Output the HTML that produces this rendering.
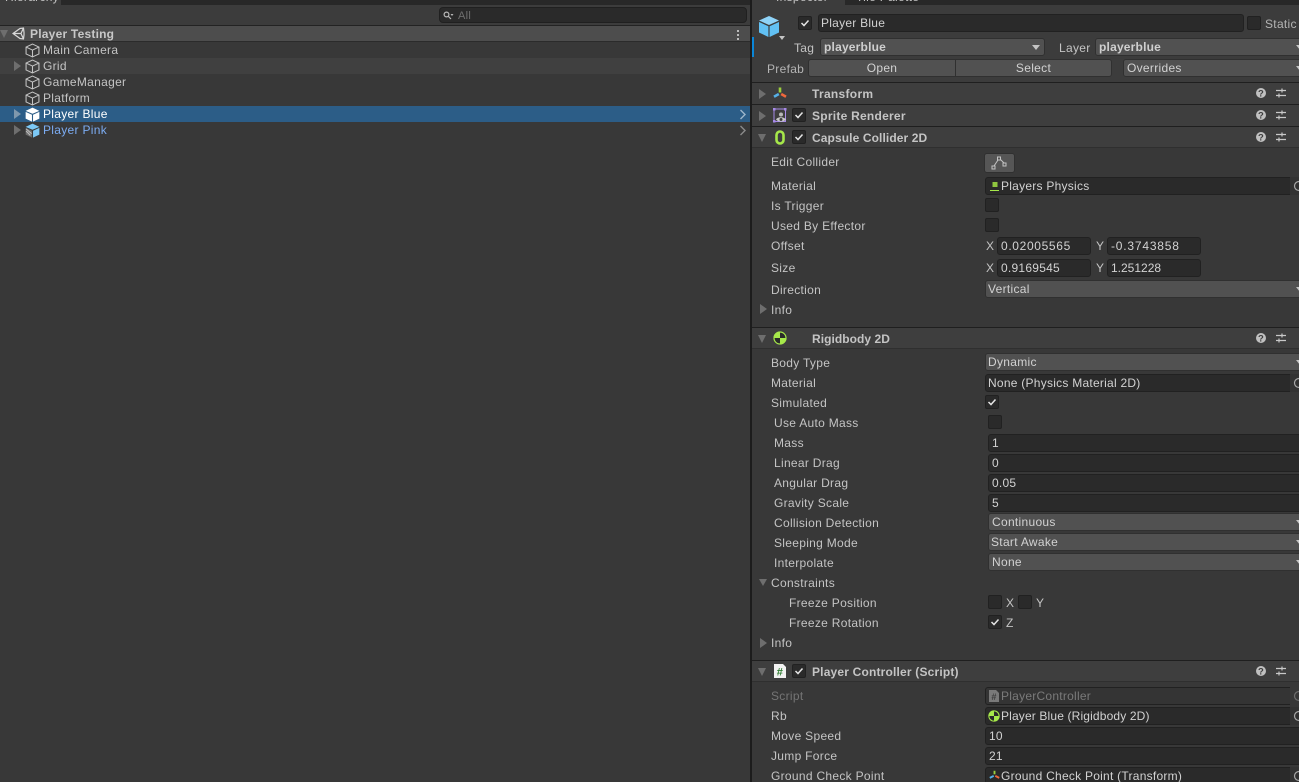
<!DOCTYPE html>
<html><head><meta charset="utf-8"><style>
html,body{margin:0;padding:0;background:#383838;}
#p{position:relative;width:1299px;height:782px;overflow:hidden;background:#383838;font:12px/16px "Liberation Sans",sans-serif;color:#c4c4c4;letter-spacing:.3px;}
#p div,#p svg{position:absolute;}
.t{white-space:nowrap;height:16px;}
.b{font-weight:bold;letter-spacing:.2px;}
.r{left:0;width:750px;height:16px;}
.hd{left:752px;width:547px;background:#3e3e3e;border-top:1px solid #1f1f1f;box-sizing:border-box;}
.in{background:#2a2a2a;border:1px solid #212121;border-radius:3px;box-sizing:border-box;height:18px;color:#d2d2d2;padding-left:3px;line-height:16px;white-space:nowrap;overflow:hidden;letter-spacing:.25px;}
.dd{background:#515151;border:1px solid #303030;border-radius:3px;box-sizing:border-box;height:18px;color:#d2d2d2;padding-left:2px;line-height:17px;white-space:nowrap;overflow:hidden;letter-spacing:.3px;}
.cb{width:14px;height:14px;background:#2a2a2a;border:1px solid #212121;border-radius:2px;box-sizing:border-box;}
.tri{width:0;height:0;border-style:solid;border-color:transparent;}
.rt{border-width:5px 0 5px 8px;border-left-color:#6e6e6e;}
.dn{border-width:8px 5px 0 5px;border-top-color:#6e6e6e;}
</style></head><body><div id="p">

<!-- top strip -->
<div style="left:0;top:0;width:750px;height:5px;background:#282828"></div>
<div style="left:0;top:0;width:61px;height:5px;background:#3c3c3c"></div>
<div class="t" style="left:5px;top:-11px;color:#c4c4c4">Hierarchy</div>
<div style="left:0;top:5px;width:750px;height:20px;background:#3c3c3c"></div>
<div style="left:439px;top:7px;width:308px;height:16px;background:#2a2a2a;border:1px solid #202020;border-radius:4px;box-sizing:border-box"></div>
<svg style="left:443px;top:11px" width="11" height="9" viewBox="0 0 11 9" fill="none" stroke="#b8b8b8" stroke-width="1.2"><circle cx="3.5" cy="3.5" r="2.4"/><path d="M5.3 5.3 8 8"/><path d="M7.5 3h3l-1.5 2z" fill="#b8b8b8" stroke="none"/></svg>
<div class="t" style="left:458px;top:8px;color:#6f6f6f;font-size:11px">All</div>

<!-- hierarchy -->
<div style="left:0;top:25px;width:750px;height:17px;background:#4d4d4d;border-top:1px solid #232323;border-bottom:1px solid #2b2b2b;box-sizing:border-box"></div>
<div class="tri" style="left:0;top:30px;border-width:8px 4px 0 4px;border-top-color:#6e6e6e"></div>
<svg style="left:12px;top:27px" width="13" height="13" viewBox="0 0 13 13" fill="none" stroke="#d8d8d8" stroke-width="1.2"><path d="M1 6.5 8 1.5 11.5 1 12 5.5 12 8 11.5 12 8 11.5 1 6.5ZM1 6.5H9L11.5 1M9 6.5 11.5 12"/></svg>
<div class="t b" style="left:30px;top:26px;color:#c8c8c8;letter-spacing:.22px">Player Testing</div>
<div style="left:737px;top:30px;width:2px;height:2px;background:#bbb;box-shadow:0 4px 0 #bbb,0 8px 0 #bbb"></div>

<div class="r" style="top:58px;background:#404040"></div>
<div class="r" style="top:106px;background:#2c5d87"></div>

<svg style="left:25px;top:43px" width="15" height="15" viewBox="0 0 14 14" fill="none" stroke="#c4c4c4" stroke-width="1"><path d="M7 1 13 3.8V10.2L7 13 1 10.2V3.8ZM1 3.8 7 6.6 13 3.8M7 6.6V13"/></svg>
<svg style="left:25px;top:59px" width="15" height="15" viewBox="0 0 14 14" fill="none" stroke="#c4c4c4" stroke-width="1"><path d="M7 1 13 3.8V10.2L7 13 1 10.2V3.8ZM1 3.8 7 6.6 13 3.8M7 6.6V13"/></svg>
<svg style="left:25px;top:75px" width="15" height="15" viewBox="0 0 14 14" fill="none" stroke="#c4c4c4" stroke-width="1"><path d="M7 1 13 3.8V10.2L7 13 1 10.2V3.8ZM1 3.8 7 6.6 13 3.8M7 6.6V13"/></svg>
<svg style="left:25px;top:91px" width="15" height="15" viewBox="0 0 14 14" fill="none" stroke="#c4c4c4" stroke-width="1"><path d="M7 1 13 3.8V10.2L7 13 1 10.2V3.8ZM1 3.8 7 6.6 13 3.8M7 6.6V13"/></svg>
<svg style="left:25px;top:107px" width="15" height="15" viewBox="0 0 14 14"><path d="M7 .6 13.4 3.6 7 6.3.6 3.6Z" fill="#fff"/><path d="M.6 4.6 6.5 7.2V13.6L.6 10.8Z" fill="#fff"/><path d="M7.5 7.2 13.4 4.6V10.8L7.5 13.6Z" fill="#fff"/></svg>
<svg style="left:25px;top:123px" width="15" height="15" viewBox="0 0 14 14"><path d="M7 .6 13.4 3.6 7 6.3.6 3.6Z" fill="#7cc8f5"/><path d="M.6 4.6 6.5 7.2V13.6L.6 10.8Z" fill="#6b6b6b"/><path d="M1 7.5 5 11.5M1 5.5 6.2 10" stroke="#bbb" stroke-width="1"/><path d="M7.5 7.2 13.4 4.6V10.8L7.5 13.6Z" fill="#7cc8f5"/></svg>

<div class="t" style="left:43px;top:42px">Main Camera</div>
<div class="t" style="left:43px;top:58px">Grid</div>
<div class="t" style="left:43px;top:74px">GameManager</div>
<div class="t" style="left:43px;top:90px">Platform</div>
<div class="t" style="left:43px;top:106px;color:#fff">Player Blue</div>
<div class="t" style="left:43px;top:122px;color:#7babf1">Player Pink</div>

<div class="tri rt" style="left:14px;top:61px;border-width:5px 0 5px 7px"></div>
<div class="tri rt" style="left:14px;top:109px;border-width:5px 0 5px 7px;border-left-color:#7f98ad"></div>
<div class="tri rt" style="left:14px;top:125px;border-width:5px 0 5px 7px"></div>
<svg style="left:739px;top:109px" width="8" height="11" viewBox="0 0 8 11" fill="none" stroke="#9db6cc" stroke-width="1.4"><path d="M1.5 1 6 5.5 1.5 10"/></svg>
<svg style="left:739px;top:125px" width="8" height="11" viewBox="0 0 8 11" fill="none" stroke="#8a8a8a" stroke-width="1.4"><path d="M1.5 1 6 5.5 1.5 10"/></svg>

<!-- divider -->
<div style="left:750px;top:0;width:2px;height:782px;background:#1c1c1c"></div>

<!-- inspector top -->
<div style="left:752px;top:0;width:547px;height:5px;background:#282828"></div>
<div style="left:752px;top:0;width:93px;height:5px;background:#3c3c3c"></div>
<div class="t" style="left:776px;top:-11px">Inspector</div>
<div class="t" style="left:856px;top:-11px">Tile Palette</div>
<div style="left:752px;top:5px;width:547px;height:77px;background:#3c3c3c"></div>
<div style="left:752px;top:37px;width:2px;height:20px;background:#0a86d8"></div>
<svg style="left:758px;top:15px" width="22" height="23" viewBox="0 0 22 23"><path d="M11 1 21 5.5 11 10 1 5.5Z" fill="#8fd3f8"/><path d="M1 7 10.4 11.2V22L1 17.5Z" fill="#62c1f4"/><path d="M11.6 11.2 21 7V17.5L11.6 22Z" fill="#62c1f4"/></svg>
<div class="tri" style="left:779px;top:36px;border-width:4px 3.5px 0 3.5px;border-top-color:#c4c4c4"></div>
<div class="cb" style="left:798px;top:16px"></div>
<svg style="left:798px;top:16px" width="14" height="14" viewBox="0 0 14 14" fill="none" stroke="#e4e4e4" stroke-width="1.5"><path d="M3.5 7 6 9.5 10.5 4.5"/></svg>
<div class="in" style="left:818px;top:14px;width:426px;height:18px;padding-left:2px;line-height:17px">Player Blue</div>
<div class="cb" style="left:1247px;top:16px"></div>
<div class="t" style="left:1265px;top:16px;color:#b4b4b4">Static</div>

<div class="t" style="left:794px;top:40px">Tag</div>
<div class="dd" style="left:820px;top:38px;width:225px;padding-left:3px;font-weight:bold;color:#cfcfcf;letter-spacing:.2px">playerblue</div>
<div class="tri" style="left:1032px;top:45px;border-width:5px 4px 0 4px;border-top-color:#c4c4c4"></div>
<div class="t" style="left:1059px;top:40px">Layer</div>
<div class="dd" style="left:1095px;top:38px;width:210px;padding-left:3px;font-weight:bold;color:#cfcfcf;letter-spacing:.2px">playerblue</div>
<div class="tri" style="left:1296px;top:45px;border-width:5px 4px 0 4px;border-top-color:#c4c4c4"></div>

<div class="t" style="left:767px;top:61px;color:#b4b4b4">Prefab</div>
<div class="dd" style="left:808px;top:59px;width:148px;padding-left:0;border-radius:3px 0 0 3px;text-align:center">Open</div>
<div class="dd" style="left:955px;top:59px;width:157px;padding-left:0;border-radius:0 3px 3px 0;text-align:center">Select</div>
<div class="dd" style="left:1123px;top:59px;width:185px;padding-left:3px">Overrides</div>
<div class="tri" style="left:1296px;top:66px;border-width:5px 4px 0 4px;border-top-color:#c4c4c4"></div>

<!-- component headers -->
<div class="hd" style="top:82px;height:22px"></div>
<div class="hd" style="top:104px;height:22px"></div>
<div class="hd" style="top:126px;height:22px;border-bottom:1px solid #2f2f2f"></div>
<div class="hd" style="top:327px;height:22px;border-bottom:1px solid #2f2f2f"></div>
<div class="hd" style="top:660px;height:22px;border-bottom:1px solid #2f2f2f"></div>

<div class="tri rt" style="left:759px;top:89px;border-width:5px 0 5px 7px"></div>
<div class="tri rt" style="left:759px;top:111px;border-width:5px 0 5px 7px"></div>
<div class="tri dn" style="left:758px;top:134px;border-width:8px 4.5px 0 4.5px"></div>
<div class="tri dn" style="left:758px;top:335px;border-width:8px 4.5px 0 4.5px"></div>
<div class="tri dn" style="left:758px;top:668px;border-width:8px 4.5px 0 4.5px"></div>

<svg style="left:773px;top:87px" width="14" height="13" viewBox="0 0 14 13" fill="none" stroke-width="2.6"><path d="M7 0.5V5.5" stroke="#9ccf3c"/><path d="M5.8 7 1 9.8" stroke="#56b0e6"/><path d="M8.2 7 13 9.8" stroke="#f0683c"/></svg>
<svg style="left:773px;top:108px" width="14" height="15" viewBox="0 0 14 15" fill="none"><rect x="1" y="1" width="11.5" height="12.5" stroke="#a78ae8" stroke-width="1"/><rect x="0" y="0" width="2.5" height="2.5" fill="#a78ae8"/><rect x="11" y="0" width="2.5" height="2.5" fill="#a78ae8"/><rect x="0" y="12" width="2.5" height="2.5" fill="#a78ae8"/><circle cx="8" cy="6.5" r="2" fill="#b8b8b8"/><path d="M3 11.5c1.5-3 8-3 10 0-2 2.8-8 2.8-10 0Z" fill="#c8c8c8"/><circle cx="8" cy="11.5" r="1.5" fill="#3e3e3e"/></svg>
<div class="cb" style="left:792px;top:108px"></div>
<svg style="left:792px;top:108px" width="14" height="14" viewBox="0 0 14 14" fill="none" stroke="#e4e4e4" stroke-width="1.5"><path d="M3.5 7 6 9.5 10.5 4.5"/></svg>
<svg style="left:775px;top:130px" width="10" height="15" viewBox="0 0 10 15"><rect x="1.5" y="1.5" width="7" height="12" rx="3.5" fill="none" stroke="#a6e84a" stroke-width="2.6"/></svg>
<div class="cb" style="left:792px;top:130px"></div>
<svg style="left:792px;top:130px" width="14" height="14" viewBox="0 0 14 14" fill="none" stroke="#e4e4e4" stroke-width="1.5"><path d="M3.5 7 6 9.5 10.5 4.5"/></svg>
<svg style="left:773px;top:331px" width="14" height="14" viewBox="0 0 14 14"><circle cx="7" cy="7" r="6.5" fill="#a6e84a"/><path d="M7 .5A6.5 6.5 0 0 1 13.5 7H7ZM7 7V13.5A6.5 6.5 0 0 1 .5 7Z" fill="#2a2a2a"/><circle cx="7" cy="7" r="6" fill="none" stroke="#a6e84a" stroke-width="1.2"/></svg>
<svg style="left:774px;top:664px" width="12" height="14" viewBox="0 0 12 14"><path d="M0 0H9L12 3V14H0Z" fill="#f2f2f2"/><text x="6" y="11.5" font-family="Liberation Sans" font-size="11" font-weight="bold" text-anchor="middle" fill="#2f7d32">#</text></svg>
<div class="cb" style="left:792px;top:664px"></div>
<svg style="left:792px;top:664px" width="14" height="14" viewBox="0 0 14 14" fill="none" stroke="#e4e4e4" stroke-width="1.5"><path d="M3.5 7 6 9.5 10.5 4.5"/></svg>

<div class="t b" style="left:812px;top:86px;letter-spacing:.3px">Transform</div>
<div class="t b" style="left:812px;top:108px;letter-spacing:.25px">Sprite Renderer</div>
<div class="t b" style="left:812px;top:130px;letter-spacing:.1px">Capsule Collider 2D</div>
<div class="t b" style="left:812px;top:331px;letter-spacing:.05px">Rigidbody 2D</div>
<div class="t b" style="left:812px;top:664px;letter-spacing:.18px">Player Controller (Script)</div>

<!-- help/settings -->
<svg style="left:1256px;top:88px" width="30" height="10" viewBox="0 0 30 10"><circle cx="5" cy="5" r="5" fill="#c0c0c0"/><text x="5" y="8.4" font-family="Liberation Sans" font-size="9.5" font-weight="bold" text-anchor="middle" fill="#3e3e3e">?</text><path d="M20 2.5H30M20 7.5H30M26 .5V4.5M23 5.5V9.5" stroke="#c8c8c8" stroke-width="1.2"/></svg>
<svg style="left:1256px;top:110px" width="30" height="10" viewBox="0 0 30 10"><circle cx="5" cy="5" r="5" fill="#c0c0c0"/><text x="5" y="8.4" font-family="Liberation Sans" font-size="9.5" font-weight="bold" text-anchor="middle" fill="#3e3e3e">?</text><path d="M20 2.5H30M20 7.5H30M26 .5V4.5M23 5.5V9.5" stroke="#c8c8c8" stroke-width="1.2"/></svg>
<svg style="left:1256px;top:132px" width="30" height="10" viewBox="0 0 30 10"><circle cx="5" cy="5" r="5" fill="#c0c0c0"/><text x="5" y="8.4" font-family="Liberation Sans" font-size="9.5" font-weight="bold" text-anchor="middle" fill="#3e3e3e">?</text><path d="M20 2.5H30M20 7.5H30M26 .5V4.5M23 5.5V9.5" stroke="#c8c8c8" stroke-width="1.2"/></svg>
<svg style="left:1256px;top:333px" width="30" height="10" viewBox="0 0 30 10"><circle cx="5" cy="5" r="5" fill="#c0c0c0"/><text x="5" y="8.4" font-family="Liberation Sans" font-size="9.5" font-weight="bold" text-anchor="middle" fill="#3e3e3e">?</text><path d="M20 2.5H30M20 7.5H30M26 .5V4.5M23 5.5V9.5" stroke="#c8c8c8" stroke-width="1.2"/></svg>
<svg style="left:1256px;top:666px" width="30" height="10" viewBox="0 0 30 10"><circle cx="5" cy="5" r="5" fill="#c0c0c0"/><text x="5" y="8.4" font-family="Liberation Sans" font-size="9.5" font-weight="bold" text-anchor="middle" fill="#3e3e3e">?</text><path d="M20 2.5H30M20 7.5H30M26 .5V4.5M23 5.5V9.5" stroke="#c8c8c8" stroke-width="1.2"/></svg>

<!-- capsule collider body -->
<div class="t" style="left:771px;top:154px">Edit Collider</div>
<div class="dd" style="left:984px;top:153px;width:31px;height:20px;background:#565656"></div>
<svg style="left:991px;top:156px" width="17" height="14" viewBox="0 0 17 14" fill="none" stroke="#c4c4c4" stroke-width="1"><rect x="1" y="10" width="3" height="3"/><rect x="6.5" y="1" width="3" height="3"/><rect x="12" y="7" width="3" height="3"/><path d="M3 10 7 4M9.5 3.5 13 7"/></svg>

<div class="t" style="left:771px;top:178px">Material</div>
<div class="in" style="left:985px;top:177px;width:320px;padding-left:15px">Players Physics</div>
<svg style="left:989px;top:181px" width="11" height="11" viewBox="0 0 11 11"><rect x="3.5" y="1" width="5" height="5" fill="#8fc63f"/><path d="M1 9.5H10" stroke="#a6e84a" stroke-width="1"/></svg>
<div class="t" style="left:771px;top:198px">Is Trigger</div>
<div class="cb" style="left:985px;top:198px"></div>
<div class="t" style="left:771px;top:218px">Used By Effector</div>
<div class="cb" style="left:985px;top:218px"></div>
<div class="t" style="left:771px;top:238px">Offset</div>
<div class="t" style="left:986px;top:238px">X</div>
<div class="in" style="left:997px;top:237px;width:94px;letter-spacing:.65px">0.02005565</div>
<div class="t" style="left:1096px;top:238px">Y</div>
<div class="in" style="left:1107px;top:237px;width:94px;letter-spacing:.8px">-0.3743858</div>
<div class="t" style="left:771px;top:260px">Size</div>
<div class="t" style="left:986px;top:260px">X</div>
<div class="in" style="left:997px;top:259px;width:94px;letter-spacing:.25px">0.9169545</div>
<div class="t" style="left:1096px;top:260px">Y</div>
<div class="in" style="left:1107px;top:259px;width:94px;letter-spacing:0">1.251228</div>
<div class="t" style="left:771px;top:282px">Direction</div>
<div class="dd" style="left:985px;top:280px;width:320px">Vertical</div>
<div class="tri" style="left:1296px;top:287px;border-width:5px 4px 0 4px;border-top-color:#c4c4c4"></div>
<div class="tri rt" style="left:760px;top:304px;border-width:5px 0 5px 7px"></div>
<div class="t" style="left:771px;top:302px">Info</div>

<!-- rigidbody body -->
<div class="t" style="left:771px;top:355px">Body Type</div>
<div class="dd" style="left:985px;top:353px;width:320px">Dynamic</div>
<div class="tri" style="left:1296px;top:360px;border-width:5px 4px 0 4px;border-top-color:#c4c4c4"></div>
<div class="t" style="left:771px;top:375px">Material</div>
<div class="in" style="left:985px;top:374px;width:320px;padding-left:2px">None (Physics Material 2D)</div>
<div class="t" style="left:771px;top:395px">Simulated</div>
<div class="cb" style="left:985px;top:395px"></div>
<svg style="left:985px;top:395px" width="14" height="14" viewBox="0 0 14 14" fill="none" stroke="#e4e4e4" stroke-width="1.5"><path d="M3.5 7 6 9.5 10.5 4.5"/></svg>
<div class="t" style="left:774px;top:415px">Use Auto Mass</div>
<div class="cb" style="left:988px;top:415px"></div>
<div class="t" style="left:774px;top:435px">Mass</div>
<div class="in" style="left:988px;top:434px;width:320px">1</div>
<div class="t" style="left:774px;top:455px">Linear Drag</div>
<div class="in" style="left:988px;top:454px;width:320px">0</div>
<div class="t" style="left:774px;top:475px">Angular Drag</div>
<div class="in" style="left:988px;top:474px;width:320px">0.05</div>
<div class="t" style="left:774px;top:495px">Gravity Scale</div>
<div class="in" style="left:988px;top:494px;width:320px">5</div>
<div class="t" style="left:774px;top:515px">Collision Detection</div>
<div class="dd" style="left:988px;top:513px;width:320px;padding-left:3px">Continuous</div>
<div class="tri" style="left:1296px;top:520px;border-width:5px 4px 0 4px;border-top-color:#c4c4c4"></div>
<div class="t" style="left:774px;top:535px">Sleeping Mode</div>
<div class="dd" style="left:988px;top:533px;width:320px;padding-left:2px">Start Awake</div>
<div class="tri" style="left:1296px;top:540px;border-width:5px 4px 0 4px;border-top-color:#c4c4c4"></div>
<div class="t" style="left:774px;top:555px">Interpolate</div>
<div class="dd" style="left:988px;top:553px;width:320px;padding-left:3px">None</div>
<div class="tri" style="left:1296px;top:560px;border-width:5px 4px 0 4px;border-top-color:#c4c4c4"></div>
<div class="tri dn" style="left:759px;top:579px;border-width:7px 4.5px 0 4.5px"></div>
<div class="t" style="left:771px;top:575px">Constraints</div>
<div class="t" style="left:789px;top:595px">Freeze Position</div>
<div class="cb" style="left:988px;top:595px"></div>
<div class="t" style="left:1006px;top:595px">X</div>
<div class="cb" style="left:1018px;top:595px"></div>
<div class="t" style="left:1036px;top:595px">Y</div>
<div class="t" style="left:789px;top:615px">Freeze Rotation</div>
<div class="cb" style="left:988px;top:615px"></div>
<svg style="left:988px;top:615px" width="14" height="14" viewBox="0 0 14 14" fill="none" stroke="#e4e4e4" stroke-width="1.5"><path d="M3.5 7 6 9.5 10.5 4.5"/></svg>
<div class="t" style="left:1006px;top:615px">Z</div>
<div class="tri rt" style="left:760px;top:638px;border-width:5px 0 5px 7px"></div>
<div class="t" style="left:771px;top:635px">Info</div>

<!-- script body -->
<div class="t" style="left:771px;top:688px;color:#757575">Script</div>
<div class="in" style="left:985px;top:687px;width:320px;padding-left:15px;background:#343434;color:#7a7a7a">PlayerController</div>
<svg style="left:989px;top:690px" width="10" height="12" viewBox="0 0 10 12"><path d="M0 0H7L10 3V12H0Z" fill="#7a7a7a"/><text x="5" y="10" font-family="Liberation Sans" font-size="9" font-weight="bold" text-anchor="middle" fill="#3c3c3c">#</text></svg>
<div class="t" style="left:771px;top:708px">Rb</div>
<div class="in" style="left:985px;top:707px;width:320px;padding-left:15px;letter-spacing:.15px">Player Blue (Rigidbody 2D)</div>
<svg style="left:988px;top:710px" width="12" height="12" viewBox="0 0 14 14"><circle cx="7" cy="7" r="6.5" fill="#a6e84a"/><path d="M7 .5A6.5 6.5 0 0 1 13.5 7H7ZM7 7V13.5A6.5 6.5 0 0 1 .5 7Z" fill="#2a2a2a"/><circle cx="7" cy="7" r="6" fill="none" stroke="#a6e84a" stroke-width="1.2"/></svg>
<div class="t" style="left:771px;top:728px">Move Speed</div>
<div class="in" style="left:985px;top:727px;width:320px">10</div>
<div class="t" style="left:771px;top:748px">Jump Force</div>
<div class="in" style="left:985px;top:747px;width:320px">21</div>
<div class="t" style="left:771px;top:768px">Ground Check Point</div>
<div class="in" style="left:985px;top:767px;width:320px;padding-left:15px">Ground Check Point (Transform)</div>
<svg style="left:989px;top:770px" width="11" height="11" viewBox="0 0 14 13" fill="none" stroke-width="2.4"><path d="M7 0.5V5" stroke="#9ccf3c"/><path d="M6 7 1 9.5" stroke="#56b0e6"/><path d="M8 7 13 9.5" stroke="#f0683c"/></svg>

<!-- object pickers -->
<svg style="left:1290px;top:177px" width="9" height="18" viewBox="0 0 9 18"><rect width="9" height="18" fill="#333"/><circle cx="9" cy="9" r="4.5" fill="none" stroke="#a8a8a8" stroke-width="1.2"/></svg>
<svg style="left:1290px;top:374px" width="9" height="18" viewBox="0 0 9 18"><rect width="9" height="18" fill="#333"/><circle cx="9" cy="9" r="4.5" fill="none" stroke="#a8a8a8" stroke-width="1.2"/></svg>
<svg style="left:1290px;top:687px" width="9" height="18" viewBox="0 0 9 18"><rect width="9" height="18" fill="#383838"/><circle cx="9" cy="9" r="4.5" fill="none" stroke="#6e6e6e" stroke-width="1.2"/></svg>
<svg style="left:1290px;top:707px" width="9" height="18" viewBox="0 0 9 18"><rect width="9" height="18" fill="#333"/><circle cx="9" cy="9" r="4.5" fill="none" stroke="#a8a8a8" stroke-width="1.2"/></svg>
<svg style="left:1290px;top:767px" width="9" height="15" viewBox="0 0 9 15"><rect width="9" height="15" fill="#333"/><circle cx="9" cy="9" r="4.5" fill="none" stroke="#a8a8a8" stroke-width="1.2"/></svg>

</div></body></html>
